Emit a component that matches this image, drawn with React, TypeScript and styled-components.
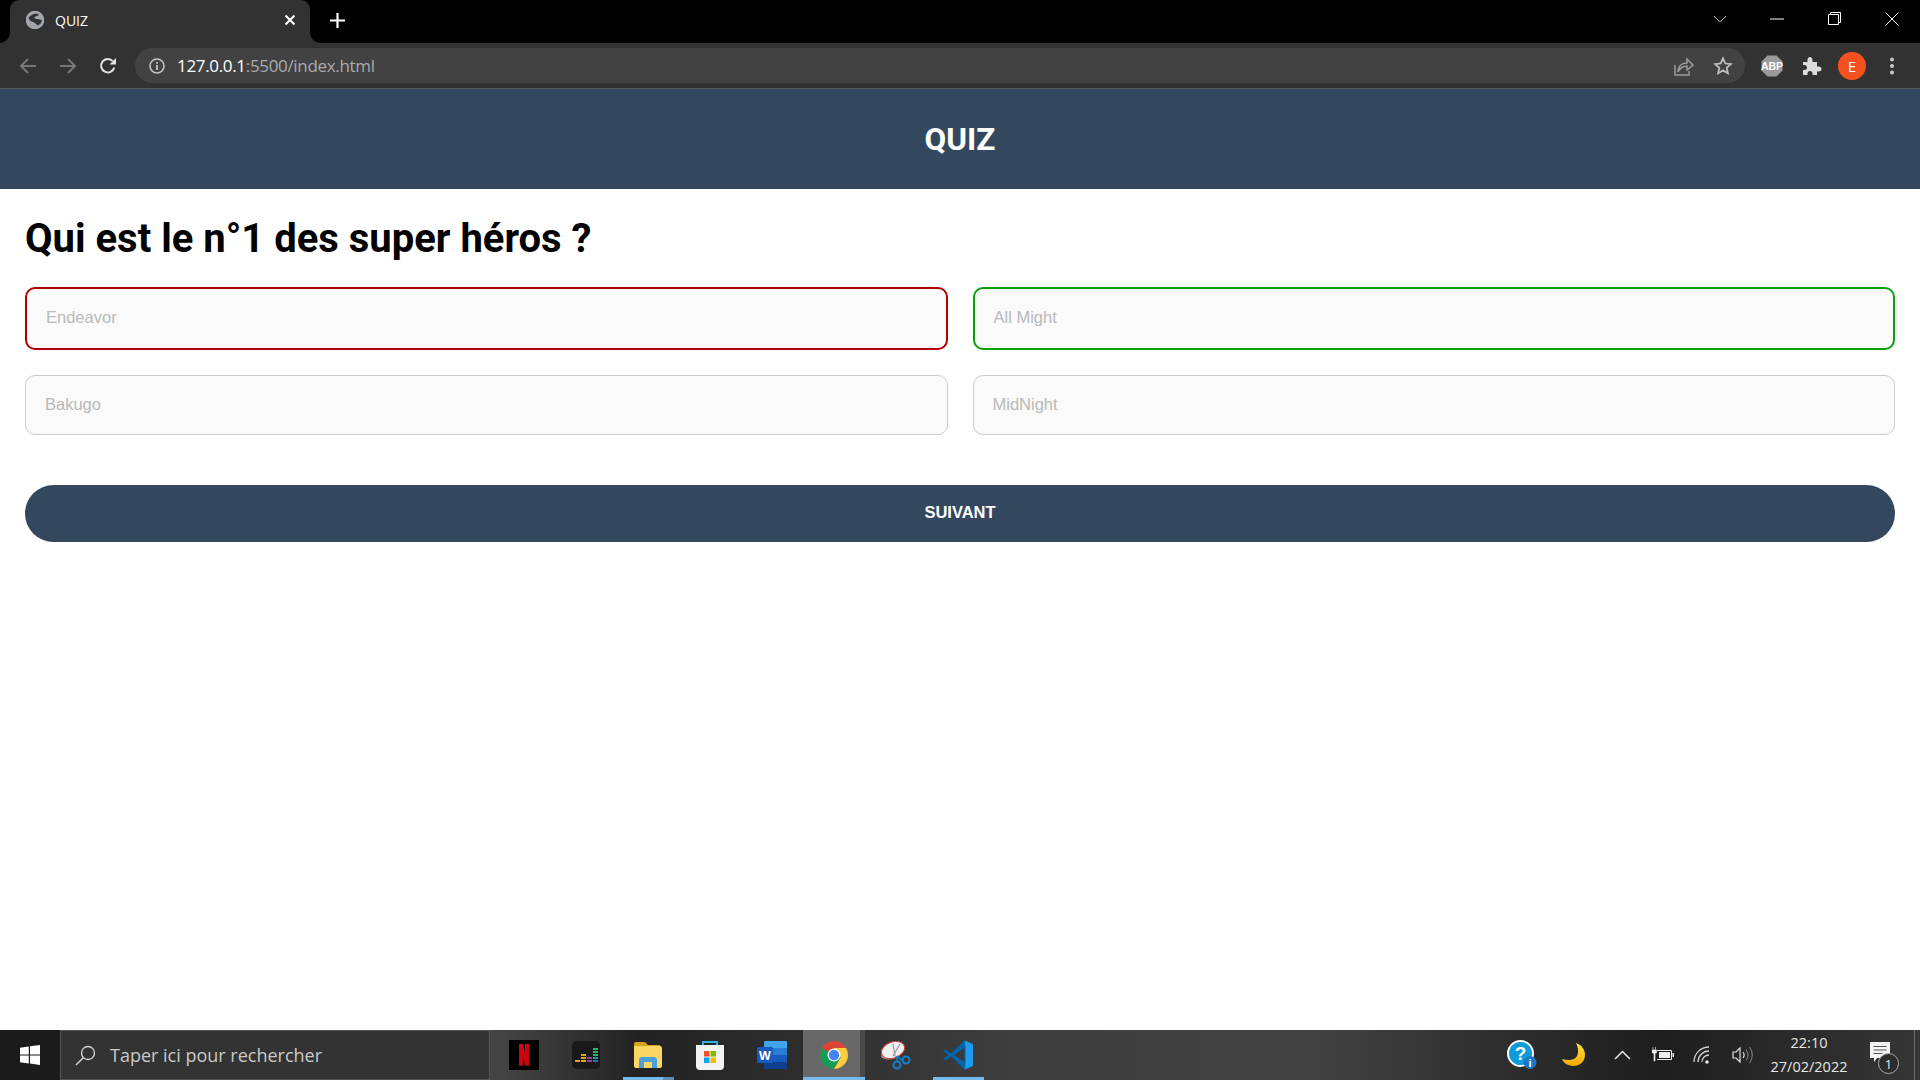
import React from 'react';
import styled, { createGlobalStyle } from 'styled-components';

const GlobalStyle = createGlobalStyle`
  html, body {
    margin: 0;
    padding: 0;
    height: 100%;
    background: #fff;
  }
  #root {
    height: 100%;
  }
  * {
    box-sizing: border-box;
  }
`;

const Screen = styled.div`
  display: flex;
  flex-direction: column;
  width: 1920px;
  height: 1080px;
  overflow: hidden;
`;

//----BROWSER---CHROME----//
const TabStrip = styled.div`
  display: flex;
  align-items: flex-end;
  height: 43px;
  padding-left: 10px;
  background: #000;
`;

const Tab = styled.div`
  position: relative;
  display: flex;
  align-items: center;
  width: 300px;
  height: 43px;
  padding: 0 14px 3px 16px;
  background: #323232;
  border-radius: 9px 9px 0 0;
  color: #fff;
  font: 14px 'Open Sans', sans-serif;

  &::before,
  &::after {
    content: '';
    position: absolute;
    bottom: 0;
    width: 10px;
    height: 10px;
  }
  &::before {
    left: -10px;
    background: radial-gradient(circle at 0 0, #000 9.5px, #323232 10px);
  }
  &::after {
    right: -10px;
    background: radial-gradient(circle at 100% 0, #000 9.5px, #323232 10px);
  }
`;

const TabTitle = styled.span`
  flex: 1;
  margin-left: 11px;
`;

const NewTab = styled.div`
  display: flex;
  margin: 0 0 15px 20px;
`;

const WindowControls = styled.div`
  display: flex;
  align-items: center;
  margin-left: auto;
  height: 43px;
  padding-bottom: 6px;
`;

const WindowButton = styled.div<{ $w: number }>`
  display: flex;
  justify-content: center;
  width: ${(p) => p.$w}px;
`;

const Toolbar = styled.div`
  display: flex;
  align-items: center;
  height: 46px;
  padding-left: 8px;
  background: #323232;
  border-bottom: 1px solid #5c5c5c;
`;

const NavButton = styled.div`
  display: flex;
  justify-content: center;
  width: 40px;
`;

const Omnibox = styled.div`
  display: flex;
  align-items: center;
  width: 1610px;
  height: 35px;
  margin-left: 7px;
  padding: 0 12px 0 14px;
  background: #424242;
  border-radius: 18px;
`;

const Url = styled.span`
  margin-left: 12px;
  color: #a8abae;
  font: 17px 'Open Sans', sans-serif;
  letter-spacing: -0.33px;
`;

const UrlHost = styled.span`
  color: #fff;
`;

const OmniActions = styled.div`
  display: flex;
  align-items: center;
  gap: 19px;
  margin-left: auto;
`;

const Extensions = styled.div`
  display: flex;
  align-items: center;
  margin-left: 7px;
`;

const ExtensionSlot = styled.div`
  display: flex;
  justify-content: center;
  align-items: center;
  width: 40px;
`;

const Avatar = styled.div`
  display: flex;
  align-items: center;
  justify-content: center;
  width: 28px;
  height: 28px;
  border-radius: 50%;
  background: #f4511e;
  color: #fff;
  font: 15px 'Open Sans', sans-serif;
`;

//----QUIZ---PAGE----//
const Page = styled.main`
  flex: 1;
  background: #fff;
`;

const Header = styled.header`
  display: flex;
  align-items: center;
  justify-content: center;
  height: 100px;
  background: #33485e;
`;

const HeaderTitle = styled.h1`
  margin: 0;
  color: #fff;
  font: 700 31.5px Roboto, sans-serif;
`;

const Content = styled.section`
  padding: 0 25px;
`;

const Question = styled.h2`
  margin: 26px 0 0;
  color: #000;
  font: 700 40px/48px Roboto, sans-serif;
`;

const Answers = styled.div`
  display: grid;
  grid-template-columns: 1fr 1fr;
  gap: 25px;
  margin-top: 24px;
`;

const Answer = styled.button<{ $state?: 'wrong' | 'right' }>`
  height: ${(p) => (p.$state ? 63 : 60)}px;
  padding: 0 19px 2px;
  background: #fafafa;
  border: ${(p) =>
    p.$state === 'wrong' ? '2px solid #b00000' : p.$state === 'right' ? '2px solid #0aa00a' : '1px solid #ccc'};
  border-radius: 10px;
  color: #b9b9b9;
  font: 16.5px 'Liberation Sans', Arial, sans-serif;
  text-align: left;
`;

const NextButton = styled.button`
  display: block;
  width: 100%;
  height: 57px;
  margin-top: 50px;
  padding-bottom: 4px;
  background: #33485e;
  border: 0;
  border-radius: 29px;
  color: #fff;
  font: 700 16.5px 'Liberation Sans', Arial, sans-serif;
`;

//----WINDOWS---TASKBAR----//
const Taskbar = styled.footer`
  display: flex;
  height: 50px;
  background: linear-gradient(
    90deg,
    #1b1b1b 0,
    #1b1b1b 60px,
    #444 500px,
    #222 640px,
    #3d3d3d 1000px,
    #434343 1300px,
    #1e1e1e 1660px,
    #363636 1920px
  );
`;

const StartButton = styled.div`
  display: flex;
  align-items: center;
  justify-content: center;
  width: 60px;
  background: #1b1b1b;
`;

const SearchBox = styled.div`
  display: flex;
  align-items: center;
  width: 430px;
  padding-left: 14px;
  background: #333;
  border: 1px solid #565656;
  color: #c9c9c9;
  font: 18px 'Open Sans', sans-serif;
`;

const SearchText = styled.span`
  margin-left: 14px;
`;

const TaskApps = styled.div`
  display: flex;
  margin-left: 3px;
`;

const TaskApp = styled.div<{ $active?: boolean; $open?: boolean; $stacked?: boolean }>`
  position: relative;
  display: flex;
  align-items: center;
  justify-content: center;
  width: 62px;
  background: ${(p) => (p.$active ? 'linear-gradient(90deg, #686868 57px, #4a4a4a 57px)' : 'transparent')};

  &::after {
    content: '';
    display: ${(p) => (p.$open ? 'block' : 'none')};
    position: absolute;
    left: ${(p) => (p.$active ? 0 : 6)}px;
    right: ${(p) => (p.$active ? 0 : 5)}px;
    bottom: 0;
    height: 3px;
    background: ${(p) =>
      p.$stacked ? 'linear-gradient(90deg, #76b9ed calc(100% - 11px), #5d8fb5 calc(100% - 11px))' : '#76b9ed'};
  }
`;

const Tray = styled.div`
  display: flex;
  margin-left: auto;
  padding-right: 5px;
`;

const TrayItem = styled.div<{ $w: number }>`
  display: flex;
  align-items: center;
  justify-content: center;
  width: ${(p) => p.$w}px;
`;

const Clock = styled.div`
  display: flex;
  flex-direction: column;
  align-items: center;
  justify-content: center;
  width: 94px;
  color: #e6e6e6;
  font: 14.5px/24px 'Open Sans', sans-serif;
`;

const NotificationWrap = styled.div`
  position: relative;
  display: flex;
  align-items: center;
  justify-content: center;
  width: 59px;
  padding: 0 11px 6px 0;
  border-right: 1px solid #6e6e6e;
`;

const NotificationBadge = styled.span`
  position: absolute;
  left: 22px;
  top: 23px;
  display: flex;
  align-items: center;
  justify-content: center;
  width: 21px;
  height: 21px;
  border: 1px solid #aaa;
  border-radius: 50%;
  background: #2c2c2c;
  color: #e8e8e8;
  font: 13px 'Open Sans', sans-serif;
`;

//----ICONS----//
const GlobeIcon = () => (
  <svg width="18" height="18" viewBox="0 0 18 18">
    <circle cx="9" cy="9" r="8.5" fill="#a2a6ab" />
    <path
      d="M2.5 6.500C4 5 6 3.500 8 3c2.500-.5 4.500 0 5 .5-1 1.500-3.500 1.500-4.500 2.500-.8 1 .5 1.800 2.500 2 2 .2 4 .5 5 1.500-.5 2-2 4-4 5-1.500-1-3-2.800-5-3.500C5 10.500 3 9 2.500 6.500z"
      fill="#323232"
    />
    <circle cx="9" cy="9" r="8.500" fill="none" stroke="#a2a6ab" strokeWidth="1.600" />
  </svg>
);

const CloseIcon = () => (
  <svg width="12" height="12" viewBox="0 0 12 12">
    <path d="M1.500 1.500l9 9M10.500 1.500l-9 9" stroke="#fff" strokeWidth="2" />
  </svg>
);

const PlusIcon = () => (
  <svg width="15" height="15" viewBox="0 0 15 15">
    <path d="M7.500 0v15M0 7.500h15" stroke="#fff" strokeWidth="2.200" />
  </svg>
);

const ArrowIcon = ({ flip }: { flip?: boolean }) => (
  <svg width="18" height="18" viewBox="0 0 18 18" style={flip ? { transform: 'scaleX(-1)' } : undefined}>
    <path d="M17 9H2M9 2L2 9l7 7" fill="none" stroke="#777" strokeWidth="2" />
  </svg>
);

const ReloadIcon = () => (
  <svg width="18" height="18" viewBox="0 0 18 18">
    <path d="M15.300 10.500A6.700 6.700 0 1 1 13.800 4.200" fill="none" stroke="#e3e3e3" strokeWidth="2" />
    <path d="M17 1v6.500h-6.500z" fill="#e3e3e3" />
  </svg>
);

const InfoIcon = () => (
  <svg width="16" height="16" viewBox="0 0 16 16">
    <circle cx="8" cy="8" r="7" fill="none" stroke="#c4c4c4" strokeWidth="1.600" />
    <path d="M8 7v5M8 4v1.800" stroke="#c4c4c4" strokeWidth="1.800" />
  </svg>
);

const ShareIcon = () => (
  <svg width="20" height="20" viewBox="0 0 20 20">
    <path d="M1 9v10h14v-4" fill="none" stroke="#9c9c9c" strokeWidth="1.500" />
    <path d="M4 16c0-6 4-9 9-9V3l6 6-6 5v-4c-4 0-7 2-9 6z" fill="none" stroke="#9c9c9c" strokeWidth="1.500" />
  </svg>
);

const StarIcon = () => (
  <svg width="20" height="20" viewBox="0 0 20 20">
    <path d="M10 2.500l2.300 5 5.500.6-4.100 3.700 1.200 5.400L10 14.400l-4.900 2.800 1.200-5.400-4.100-3.700 5.500-.6z" fill="none" stroke="#bcbcbc" strokeWidth="1.800" />
  </svg>
);

const AbpIcon = () => (
  <svg width="22" height="22" viewBox="0 0 22 22">
    <path d="M6.500 0.500h9l6 6v9l-6 6h-9l-6-6v-9z" fill="#9a9a9a" />
    <text x="11" y="15" textAnchor="middle" fill="#fff" fontFamily="Liberation Sans" fontWeight="700" fontSize="10.500">
      ABP
    </text>
  </svg>
);

const PuzzleIcon = () => (
  <svg width="20" height="20" viewBox="0 0 20 20">
    <path
      d="M1 6h4.500C5 2 7 1 8 1s3 1 2.500 5H15v4.500c3.500-.5 4.500 1 4.500 2.500s-1 3-4.500 2.500V19h-4.500c.5-3-1-4-2.500-4s-3 1-2.500 4H1v-5c3 .5 4-1 4-2.500S4 8.500 1 9z"
      fill="#dcdcdc"
    />
  </svg>
);

const MenuDots = () => (
  <svg width="4" height="18" viewBox="0 0 4 18">
    <circle cx="2" cy="2.500" r="2" fill="#c9c9c9" />
    <circle cx="2" cy="9" r="2" fill="#c9c9c9" />
    <circle cx="2" cy="15.500" r="2" fill="#c9c9c9" />
  </svg>
);

const WindowsLogo = () => (
  <svg width="20" height="20" viewBox="0 0 20 20">
    <path d="M0 2.800l8.800-1.300v8H0zM10 1.300L20 0v9.500H10zM0 10.600h8.800v8L0 17.300zM10 10.600h10V20l-10-1.400z" fill="#fff" />
  </svg>
);

const SearchIcon = () => (
  <svg width="21" height="21" viewBox="0 0 21 21">
    <circle cx="13" cy="8" r="6.500" fill="none" stroke="#d8d8d8" strokeWidth="1.300" />
    <path d="M8.500 12.500L1 20" stroke="#d8d8d8" strokeWidth="1.500" />
  </svg>
);

const NetflixIcon = () => (
  <svg width="30" height="30" viewBox="0 0 30 30">
    <rect width="30" height="30" fill="#000" />
    <path d="M10 4h4l2 9V4h4v22l-4-.7-2-9v9.300l-4 .4z" fill="#c8070f" />
  </svg>
);

const DeezerIcon = () => (
  <svg width="28" height="28" viewBox="0 0 28 28">
    <rect width="28" height="28" rx="5" fill="#191919" />
    <path d="M3 19h5v2H3z" fill="#f29a1d" />
    <path d="M9 19h5v2H9zM9 16h5v2H9zM9 13h5v2H9z" fill="#e8a41d" />
    <path d="M15 19h5v2h-5zM15 16h5v2h-5z" fill="#8e3f9c" />
    <path d="M21 19h5v2h-5z" fill="#2a6fc4" />
    <path d="M21 16h5v2h-5z" fill="#29a0a8" />
    <path d="M21 13h5v2h-5zM21 10h5v2h-5zM21 7h5v2h-5z" fill="#2fb36a" />
  </svg>
);

const FolderIcon = () => (
  <svg width="28" height="26" viewBox="0 0 28 26">
    <path d="M0 2a2 2 0 0 1 2-2h9l3 3h12a2 2 0 0 1 0 0v2H0z" fill="#d9a21b" />
    <path d="M0 4h26a2 2 0 0 1 2 2v18a2 2 0 0 1-2 2H2a2 2 0 0 1-2-2z" fill="#fbd664" />
    <path d="M5 26v-8a3 3 0 0 1 3-3h12a3 3 0 0 1 3 3v8h-5v-6h-8v6z" fill="#4a9fdc" />
  </svg>
);

const StoreIcon = () => (
  <svg width="30" height="30" viewBox="0 0 30 30">
    <path d="M8 6V2h14v4" fill="none" stroke="#2cb1e8" strokeWidth="2" />
    <path d="M1 5h28v21a4 4 0 0 1-4 4H5a4 4 0 0 1-4-4z" fill="#f3f3f3" />
    <rect x="9" y="11" width="5.500" height="5.500" fill="#f25022" />
    <rect x="15.500" y="11" width="5.500" height="5.500" fill="#7fba00" />
    <rect x="9" y="17.500" width="5.500" height="5.500" fill="#00a4ef" />
    <rect x="15.500" y="17.500" width="5.500" height="5.500" fill="#ffb900" />
  </svg>
);

const WordIcon = () => (
  <svg width="30" height="28" viewBox="0 0 30 28">
    <path d="M7 1a1 1 0 0 1 1-1h21a1 1 0 0 1 1 1v6H7z" fill="#41a5ee" />
    <path d="M7 7h23v7H7z" fill="#2b7cd3" />
    <path d="M7 14h23v7H7z" fill="#185abd" />
    <path d="M7 21h23v6a1 1 0 0 1-1 1H8a1 1 0 0 1-1-1z" fill="#103f91" />
    <rect x="0" y="6" width="16" height="16" rx="1.500" fill="#185abd" />
    <text x="8" y="18.500" textAnchor="middle" fill="#fff" fontFamily="Liberation Sans" fontWeight="700" fontSize="12.500">
      W
    </text>
  </svg>
);

const ChromeIcon = () => (
  <svg width="28" height="28" viewBox="0 0 28 28">
    <circle cx="14" cy="14" r="14" fill="#db4437" />
    <path d="M14 14L1.900 7A14 14 0 0 0 14 28l7-12z" fill="#0f9d58" />
    <path d="M14 14l7 2-7 12A14 14 0 0 0 26.100 7H14z" fill="#ffcd40" />
    <circle cx="14" cy="14" r="6.500" fill="#fff" />
    <circle cx="14" cy="14" r="5.200" fill="#4285f4" />
  </svg>
);

const SnipIcon = () => (
  <svg width="30" height="30" viewBox="0 0 30 30">
    <ellipse cx="8" cy="16" rx="8" ry="3.500" fill="#999" />
    <ellipse cx="12" cy="10" rx="12" ry="8" fill="#f0f0f0" stroke="#d9403a" strokeWidth="1" transform="rotate(-20 12 10)" />
    <path d="M12 4l2 12M12 16l7-12" stroke="#999" strokeWidth="1.200" />
    <circle cx="16" cy="25" r="3.500" fill="none" stroke="#1780cc" strokeWidth="2" />
    <circle cx="25" cy="20" r="3.500" fill="none" stroke="#1780cc" strokeWidth="2" />
    <path d="M17 22l-2-6M22 21l-6-5" stroke="#1780cc" strokeWidth="1.600" />
  </svg>
);

const VsCodeIcon = () => (
  <svg width="30" height="30" viewBox="0 0 30 30">
    <path d="M21.500 0.500L30 4v22l-8.500 3.500z" fill="#1f9cf0" />
    <path d="M21.500 0.500L8 13.500 2.800 9.500 0 11l5.500 4L0 19l2.800 1.500L8 16.500l13.500 13 1-5.500V6z" fill="#0065a9" />
    <path d="M21.500 8L11 15l10.500 7z" fill="#3a3a3a" />
  </svg>
);

const HelpIcon = () => (
  <svg width="30" height="30" viewBox="0 0 30 30">
    <circle cx="13.500" cy="13.500" r="12.500" fill="#0f9ad8" stroke="#fff" strokeWidth="2" />
    <text x="13.500" y="20" textAnchor="middle" fill="#fff" fontFamily="Liberation Sans" fontWeight="700" fontSize="19">
      ?
    </text>
    <circle cx="23" cy="22.500" r="6.500" fill="#1b78c8" />
    <text x="23" y="26.500" textAnchor="middle" fill="#fff" fontFamily="Liberation Sans" fontWeight="700" fontSize="11">
      i
    </text>
  </svg>
);

const MoonIcon = () => (
  <svg width="24" height="24" viewBox="0 0 24 24">
    <defs>
      <linearGradient id="moon" x1="0" y1="0" x2="0" y2="1">
        <stop offset="0" stopColor="#ffe14a" />
        <stop offset="1" stopColor="#f5a800" />
      </linearGradient>
    </defs>
    <path d="M14 0c6 2 9 7 9 12 0 7-6 11-11 11-5 0-10-2-12-7 7 2 13 1 15-3 2-4 1-9-1-13z" fill="url(#moon)" />
  </svg>
);

const ChevronUp = () => (
  <svg width="17" height="10" viewBox="0 0 17 10">
    <path d="M1 9l7.500-7.500L16 9" fill="none" stroke="#e6e6e6" strokeWidth="1.500" />
  </svg>
);

const BatteryIcon = () => (
  <svg width="22" height="16" viewBox="0 0 22 16">
    <path d="M1 0v3M3.500 0v3M0 3h4.500v3H3v8H2V6H0z" fill="#f0f0f0" stroke="#f0f0f0" strokeWidth=".6" />
    <path d="M5 3.500h14.500v9H5" fill="none" stroke="#f0f0f0" strokeWidth="1" />
    <rect x="7" y="5" width="11" height="6" fill="#f0f0f0" />
    <path d="M20.500 6h1.500v4h-1.500z" fill="#f0f0f0" />
  </svg>
);

const WifiIcon = () => (
  <svg width="18" height="18" viewBox="0 0 18 18">
    <path d="M1 16A15 15 0 0 1 16 1M5 16A11 11 0 0 1 16 5M9 16a7 7 0 0 1 7-7" fill="none" stroke="#d0d0d0" strokeWidth="1.300" />
    <circle cx="14" cy="16" r="1.800" fill="#e6e6e6" />
  </svg>
);

const VolumeIcon = () => (
  <svg width="21" height="18" viewBox="0 0 21 18">
    <path d="M1 6h3l4-4v14l-4-4H1z" fill="none" stroke="#e0e0e0" strokeWidth="1.200" />
    <path d="M11 6c1.500 2 1.500 4 0 6" fill="none" stroke="#e0e0e0" strokeWidth="1.200" />
    <path d="M14 3.500c2.500 3.500 2.500 7.500 0 11M17.500 1c3.500 5 3.500 11 0 16" fill="none" stroke="#777" strokeWidth="1.200" />
  </svg>
);

const NotificationIcon = () => (
  <svg width="20" height="20" viewBox="0 0 20 20">
    <path d="M0 0h20v16H7l-3 4v-4H0z" fill="#f4f4f4" />
    <path d="M3.500 4.500h13M3.500 8h13M3.500 11.500h9" stroke="#555" strokeWidth="1" />
  </svg>
);

const App: React.FC = () => {
  return (
    <Screen>
      <GlobalStyle />
      <TabStrip>
        <Tab>
          <GlobeIcon />
          <TabTitle>QUIZ</TabTitle>
          <CloseIcon />
        </Tab>
        <NewTab>
          <PlusIcon />
        </NewTab>
        <WindowControls>
          <WindowButton $w={56}>
            <svg width="14" height="8" viewBox="0 0 14 8">
              <path d="M1 1l6 6 6-6" fill="none" stroke="#bdbdbd" strokeWidth="1" />
            </svg>
          </WindowButton>
          <WindowButton $w={58}>
            <svg width="14" height="2" viewBox="0 0 14 2">
              <path d="M0 1h14" stroke="#fff" strokeWidth="1" />
            </svg>
          </WindowButton>
          <WindowButton $w={57}>
            <svg width="13" height="13" viewBox="0 0 13 13">
              <path d="M.5 2.500h10v10H.5zM2.500 2.500V.5h10v10h-2" fill="none" stroke="#fff" strokeWidth="1" />
            </svg>
          </WindowButton>
          <WindowButton $w={57}>
            <svg width="14" height="14" viewBox="0 0 14 14">
              <path d="M.5.5l13 13M13.500.5l-13 13" stroke="#fff" strokeWidth="1" />
            </svg>
          </WindowButton>
        </WindowControls>
      </TabStrip>

      <Toolbar>
        <NavButton>
          <ArrowIcon />
        </NavButton>
        <NavButton>
          <ArrowIcon flip />
        </NavButton>
        <NavButton>
          <ReloadIcon />
        </NavButton>
        <Omnibox>
          <InfoIcon />
          <Url>
            <UrlHost>127.0.0.1</UrlHost>:5500/index.html
          </Url>
          <OmniActions>
            <ShareIcon />
            <StarIcon />
          </OmniActions>
        </Omnibox>
        <Extensions>
          <ExtensionSlot>
            <AbpIcon />
          </ExtensionSlot>
          <ExtensionSlot>
            <PuzzleIcon />
          </ExtensionSlot>
          <ExtensionSlot>
            <Avatar>E</Avatar>
          </ExtensionSlot>
          <ExtensionSlot>
            <MenuDots />
          </ExtensionSlot>
        </Extensions>
      </Toolbar>

      <Page>
        <Header>
          <HeaderTitle>QUIZ</HeaderTitle>
        </Header>
        <Content>
          <Question>Qui est le n°1 des super héros ?</Question>
          <Answers>
            <Answer $state="wrong">Endeavor</Answer>
            <Answer $state="right">All Might</Answer>
            <Answer>Bakugo</Answer>
            <Answer>MidNight</Answer>
          </Answers>
          <NextButton>SUIVANT</NextButton>
        </Content>
      </Page>

      <Taskbar>
        <StartButton>
          <WindowsLogo />
        </StartButton>
        <SearchBox>
          <SearchIcon />
          <SearchText>Taper ici pour rechercher</SearchText>
        </SearchBox>
        <TaskApps>
          <TaskApp>
            <NetflixIcon />
          </TaskApp>
          <TaskApp>
            <DeezerIcon />
          </TaskApp>
          <TaskApp $open $stacked>
            <FolderIcon />
          </TaskApp>
          <TaskApp>
            <StoreIcon />
          </TaskApp>
          <TaskApp>
            <WordIcon />
          </TaskApp>
          <TaskApp $active $open>
            <ChromeIcon />
          </TaskApp>
          <TaskApp>
            <SnipIcon />
          </TaskApp>
          <TaskApp $open>
            <VsCodeIcon />
          </TaskApp>
        </TaskApps>
        <Tray>
          <TrayItem $w={52}>
            <HelpIcon />
          </TrayItem>
          <TrayItem $w={52}>
            <MoonIcon />
          </TrayItem>
          <TrayItem $w={44}>
            <ChevronUp />
          </TrayItem>
          <TrayItem $w={38}>
            <BatteryIcon />
          </TrayItem>
          <TrayItem $w={40}>
            <WifiIcon />
          </TrayItem>
          <TrayItem $w={40}>
            <VolumeIcon />
          </TrayItem>
          <Clock>
            <span>22:10</span>
            <span>27/02/2022</span>
          </Clock>
          <NotificationWrap>
            <NotificationIcon />
            <NotificationBadge>1</NotificationBadge>
          </NotificationWrap>
        </Tray>
      </Taskbar>
    </Screen>
  );
};

export default App;
